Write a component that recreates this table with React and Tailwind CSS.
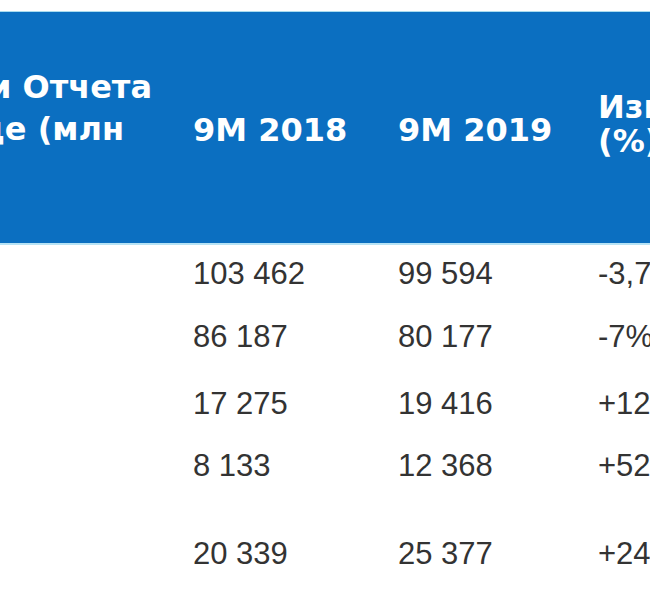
import React from "react";

const rows = [
  { h: "h-[63px]", a: "103 462", b: "99 594", c: "-3,7%" },
  { h: "h-[67px]", a: "86 187", b: "80 177", c: "-7%" },
  { h: "h-[62px]", a: "17 275", b: "19 416", c: "+12%" },
  { h: "h-[88px]", a: "8 133", b: "12 368", c: "+52%" },
  { h: "h-[70px]", a: "20 339", b: "25 377", c: "+24%" },
];

export default function App() {
  return (
    <div className="w-[650px] h-[600px] overflow-hidden bg-white pt-[11px]">
      {/* header */}
      <div
        className="grid grid-cols-[183px_205px_200px_200px] h-[234px] bg-[#0b6fc1] border-t border-[#a9dcef] border-b-2 border-b-[#b7e3f5] text-white font-bold text-[32px] whitespace-nowrap"
        style={{ fontFamily: '"DejaVu Sans", Verdana, sans-serif' }}
      >
        <div className="pt-[54px] leading-[42px]">
          <div className="flex justify-end pr-[31px]">
            <span>Основные показатели Отчета</span>
          </div>
          <div className="flex justify-end pr-[59px]">
            <span>о совокупном доходе (млн</span>
          </div>
        </div>
        <div className="pl-[10px] pt-[97px] leading-[42px]">9M 2018</div>
        <div className="pl-[10px] pt-[97px] leading-[42px]">9M 2019</div>
        <div className="pl-[10px] pt-[78px] leading-[34px]">
          <div>Изменение</div>
          <div>(%)</div>
        </div>
      </div>

      {/* body */}
      <div
        className="text-[#333] text-[31px] leading-[36px] whitespace-nowrap"
        style={{ fontFamily: '"Liberation Sans", Arial, sans-serif' }}
      >
        {rows.map((r) => (
          <div
            key={r.a}
            className={`grid grid-cols-[183px_205px_200px_200px] pt-[11px] ${r.h}`}
          >
            <div></div>
            <div className="pl-[10px]">{r.a}</div>
            <div className="pl-[10px]">{r.b}</div>
            <div className="pl-[10px]">{r.c}</div>
          </div>
        ))}
      </div>
    </div>
  );
}
